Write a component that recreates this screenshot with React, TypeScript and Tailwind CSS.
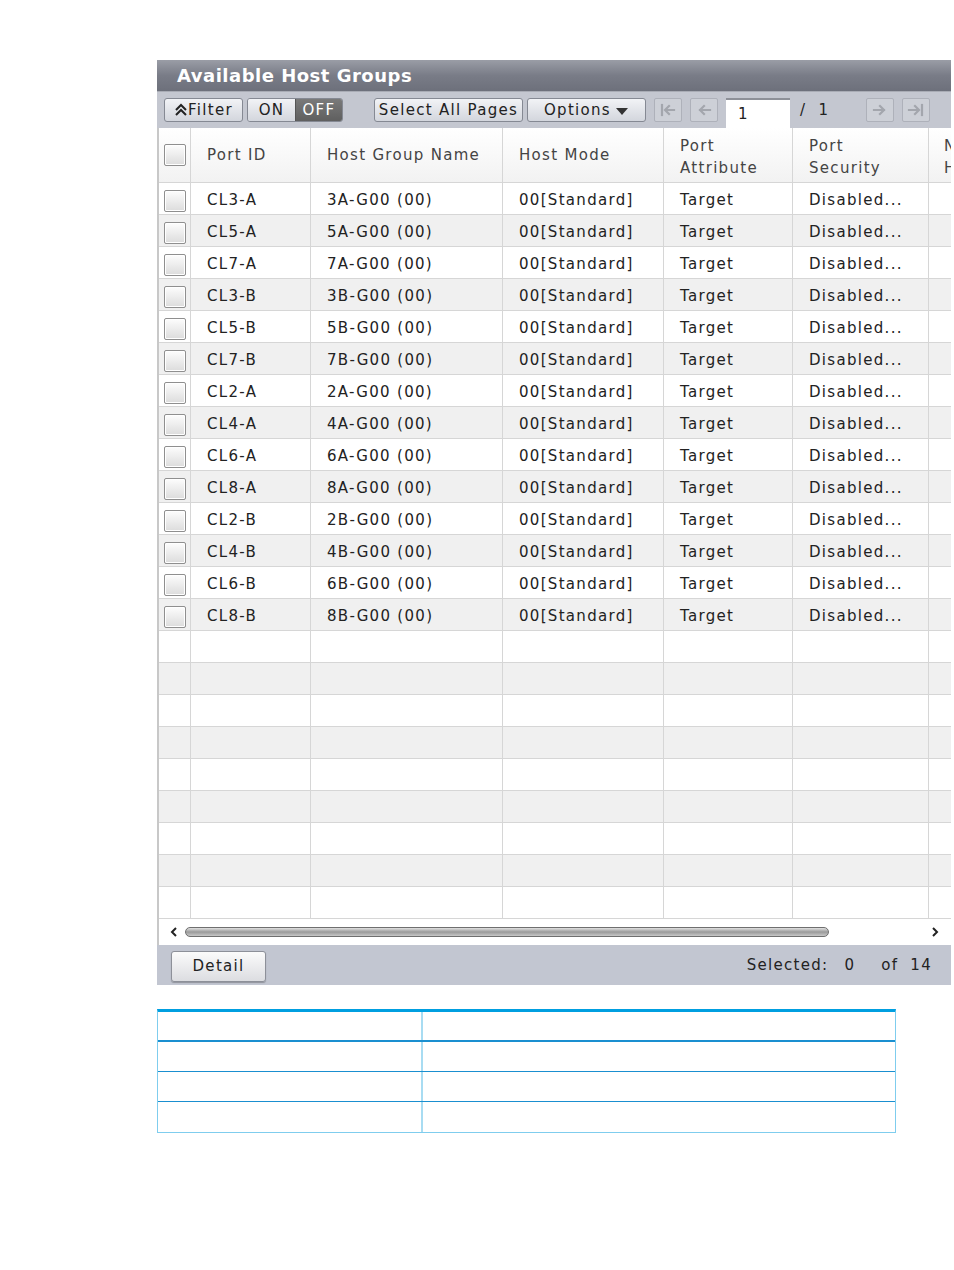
import React from "react";

const rows = [
  ["CL3-A", "3A-G00 (00)"],
  ["CL5-A", "5A-G00 (00)"],
  ["CL7-A", "7A-G00 (00)"],
  ["CL3-B", "3B-G00 (00)"],
  ["CL5-B", "5B-G00 (00)"],
  ["CL7-B", "7B-G00 (00)"],
  ["CL2-A", "2A-G00 (00)"],
  ["CL4-A", "4A-G00 (00)"],
  ["CL6-A", "6A-G00 (00)"],
  ["CL8-A", "8A-G00 (00)"],
  ["CL2-B", "2B-G00 (00)"],
  ["CL4-B", "4B-G00 (00)"],
  ["CL6-B", "6B-G00 (00)"],
  ["CL8-B", "8B-G00 (00)"],
];

const cols = "grid grid-cols-[32px_120px_192px_161px_129px_136px_22px]";
const hcell = "border-r border-[#d6d6d6] px-4 flex items-center whitespace-nowrap overflow-hidden";
const cell = "border-r border-[#d6d6d6] px-4 pt-[4px] flex items-center whitespace-nowrap overflow-hidden";

function Checkbox() {
  return (
    <div className="w-[22px] h-[22px] border border-[#8f8f8f] rounded-[2px] bg-gradient-to-b from-[#fdfdfd] to-[#dcdcdc] shadow-[inset_0_0_0_1px_#ffffff]" />
  );
}

function Btn({ children, className = "" }: { children: React.ReactNode; className?: string }) {
  return (
    <div
      className={
        "h-[24px] flex items-center justify-center border border-[#858993] rounded-[3px] bg-gradient-to-b from-[#f2f3f6] to-[#d3d6dd] text-[#222] " +
        className
      }
    >
      {children}
    </div>
  );
}

function NavBtn({ kind }: { kind: "first" | "prev" | "next" | "last" }) {
  return (
    <div className="w-[28px] h-[24px] border border-[#aeb1ba] rounded-[2px] bg-[#cdd0d7] flex items-center justify-center">
      <svg width="18" height="14" viewBox="0 0 18 14" fill="none" stroke="#a3a6ad" strokeWidth="2.2" strokeLinecap="square">
        {kind === "first" && (
          <>
            <path d="M3 2v10" />
            <path d="M15 7H7M10 3L6 7l4 4" />
          </>
        )}
        {kind === "prev" && <path d="M15 7H5M9 3L5 7l4 4" />}
        {kind === "next" && <path d="M3 7h10M9 3l4 4-4 4" />}
        {kind === "last" && (
          <>
            <path d="M15 2v10" />
            <path d="M2 7h9M8 3l4 4-4 4" />
          </>
        )}
      </svg>
    </div>
  );
}

export default function App() {
  const font = { fontFamily: '"DejaVu Sans", Verdana, sans-serif' };
  return (
    <div className="w-[954px] h-[1270px] bg-white pt-[60px]" style={font}>
      <div className="ml-[157px] w-[794px] text-[15px] tracking-[1.3px] text-[#222]">
        {/* Title bar */}
        <div className="h-[31px] bg-gradient-to-b from-[#9a9da6] via-[#797c87] to-[#6d707b] flex items-center pl-[20px]">
          <span className="text-white font-bold text-[18px] tracking-[0.5px]">Available Host Groups</span>
        </div>
        {/* Toolbar */}
        <div className="h-[37px] bg-[#c4c7d0] border-t border-[#a9acb5] flex items-center pl-[7px]">
          <Btn className="w-[79px]">
            <svg width="14" height="14" viewBox="0 0 14 14" fill="none" stroke="#222" strokeWidth="2">
              <path d="M2 7l5-5 5 5M2 12l5-5 5 5" />
            </svg>
            <span>Filter</span>
          </Btn>
          <div className="ml-[4px] h-[24px] flex border border-[#858993] rounded-[3px] overflow-hidden">
            <div className="w-[47px] flex items-center justify-center bg-gradient-to-b from-[#f2f3f6] to-[#d3d6dd]">ON</div>
            <div className="w-[47px] flex items-center justify-center bg-gradient-to-b from-[#7a7a7a] to-[#5f5f5f] text-white border-l border-[#555]">
              OFF
            </div>
          </div>
          <Btn className="ml-[31px] w-[149px]">Select All Pages</Btn>
          <Btn className="ml-[4px] w-[119px]">
            <span>Options</span>
            <svg width="14" height="10" viewBox="0 0 14 10" className="ml-[4px] mt-[3px]">
              <path d="M1 1h12L7 8z" fill="#333" />
            </svg>
          </Btn>
          <div className="ml-[8px] flex gap-[8px]">
            <NavBtn kind="first" />
            <NavBtn kind="prev" />
          </div>
          <div className="ml-[8px] w-[64px] h-[30px] bg-white border-t-2 border-[#8d9098] flex items-center pl-[12px] self-end">1</div>
          <div className="ml-[10px] w-[66px] whitespace-pre">/  1</div>
          <div className="flex gap-[8px]">
            <NavBtn kind="next" />
            <NavBtn kind="last" />
          </div>
        </div>
        {/* Table */}
        <div className="border-l-2 border-[#c8c8c8] bg-white">
          {/* Header */}
          <div className={cols + " h-[55px] border-b border-[#d6d6d6] bg-gradient-to-b from-[#ffffff] to-[#f2f2f2] text-[#444]"}>
            <div className="border-r border-[#d6d6d6] flex items-center justify-center">
              <Checkbox />
            </div>
            <div className={hcell}>Port ID</div>
            <div className={hcell}>Host Group Name</div>
            <div className={hcell}>Host Mode</div>
            <div className={hcell + " leading-[22px] pt-[3px]"}>
              <div>
                Port
                <br />
                Attribute
              </div>
            </div>
            <div className={hcell + " leading-[22px] pt-[3px]"}>
              <div>
                Port
                <br />
                Security
              </div>
            </div>
            <div className={hcell + " leading-[22px] pt-[3px] pl-[15px] pr-0 border-r-0"}>
              <div>
                Number of
                <br />
                Hosts
              </div>
            </div>
          </div>
          {rows.map((r, i) => (
            <div
              key={i}
              className={cols + " h-[32px] border-b border-[#d6d6d6] " + (i % 2 === 1 ? "bg-[#f0f0f0]" : "bg-white")}
            >
              <div className="border-r border-[#d6d6d6] pt-[4px] flex items-center justify-center">
                <Checkbox />
              </div>
              <div className={cell}>{r[0]}</div>
              <div className={cell}>{r[1]}</div>
              <div className={cell}>00[Standard]</div>
              <div className={cell}>Target</div>
              <div className={cell}>Disabled...</div>
              <div className={cell + " border-r-0"}></div>
            </div>
          ))}
          {Array.from({ length: 9 }).map((_, i) => (
            <div
              key={"e" + i}
              className={cols + " h-[32px] border-b border-[#d6d6d6] " + (i % 2 === 1 ? "bg-[#f0f0f0]" : "bg-white")}
            >
              <div className="border-r border-[#d6d6d6]" />
              <div className="border-r border-[#d6d6d6]" />
              <div className="border-r border-[#d6d6d6]" />
              <div className="border-r border-[#d6d6d6]" />
              <div className="border-r border-[#d6d6d6]" />
              <div className="border-r border-[#d6d6d6]" />
              <div />
            </div>
          ))}
          {/* Scrollbar */}
          <div className="h-[26px] flex items-center bg-white">
            <svg width="10" height="12" viewBox="0 0 10 12" className="ml-[10px]" fill="none" stroke="#222" strokeWidth="2">
              <path d="M7 2L3 6l4 4" />
            </svg>
            <div className="ml-[6px] w-[644px] h-[10px] rounded-[5px] border border-[#6f6f6f] bg-gradient-to-b from-[#e2e2e2] via-[#9a9a9a] to-[#c8c8c8]" />
            <svg width="10" height="12" viewBox="0 0 10 12" className="ml-[101px]" fill="none" stroke="#222" strokeWidth="2">
              <path d="M3 2l4 4-4 4" />
            </svg>
          </div>
        </div>
        {/* Bottom bar */}
        <div className="h-[40px] bg-[#c2c6d1] flex items-center pl-[14px] pr-[19px]">
          <div className="w-[95px] h-[31px] mt-[2px] border border-[#8d9099] rounded-[3px] bg-gradient-to-b from-[#fbfbfb] to-[#dcdde1] flex items-center justify-center text-[#222] shadow-[0_1px_1px_rgba(0,0,0,0.25)]">
            Detail
          </div>
          <div className="ml-auto flex whitespace-nowrap">
            <span>Selected:</span>
            <span className="ml-[16px]">0</span>
            <span className="ml-[26px]">of</span>
            <span className="ml-[12px]">14</span>
          </div>
        </div>
      </div>

      {/* Lower table */}
      <div className="ml-[157px] mt-[24px] w-[739px] border border-[#7fcdee] border-t-[3px] border-t-[#009fe0]">
        {[0, 1, 2, 3].map((i) => (
          <div
            key={i}
            className={
              "grid grid-cols-[265px_1fr] h-[30px] " +
              (i === 0 ? "border-b-2 border-[#1a8fd0] h-[30px]" : i < 3 ? "border-b border-[#1a8fd0]" : "")
            }
          >
            <div className="border-r-2 border-[#a8dcf2]" />
            <div />
          </div>
        ))}
      </div>
    </div>
  );
}
